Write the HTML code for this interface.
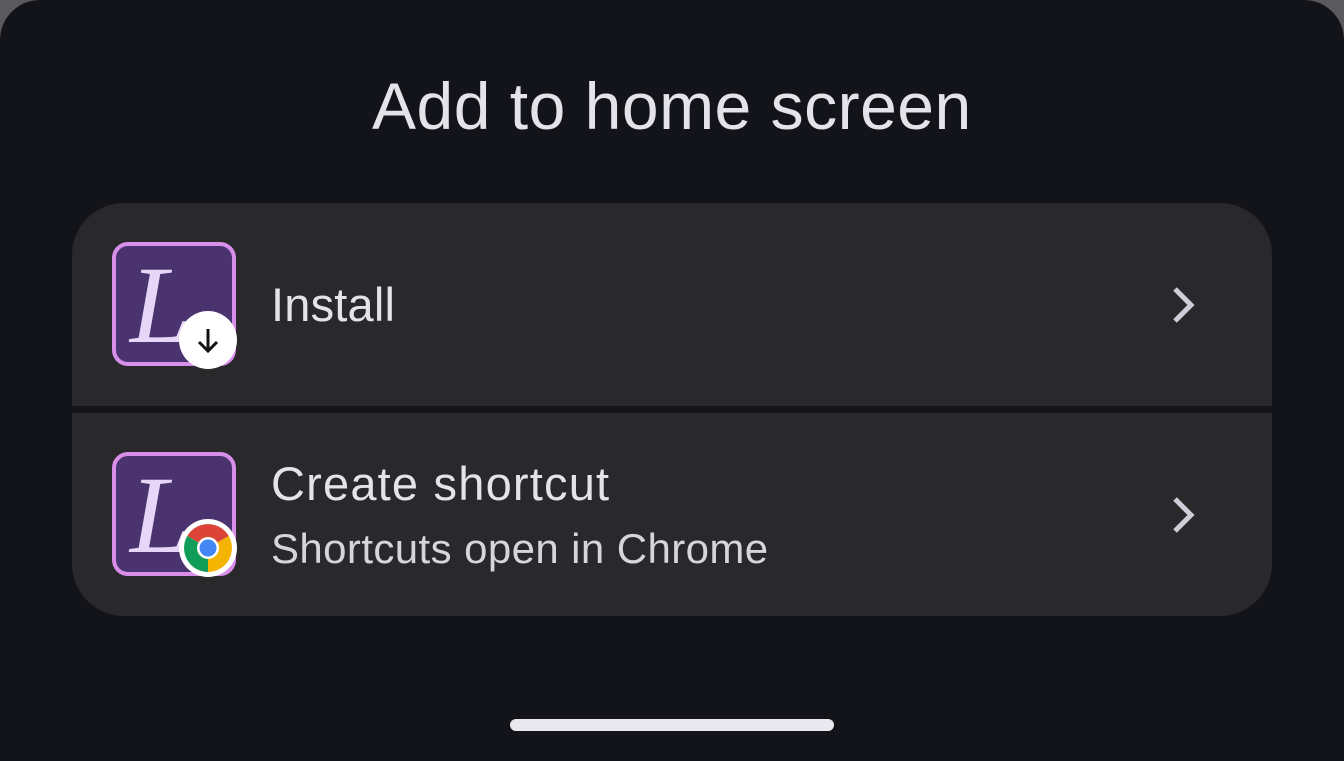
<!DOCTYPE html>
<html><head><style>
html,body{margin:0;padding:0;}
body{width:1344px;height:761px;background:#5a5a5c;position:relative;overflow:hidden;font-family:"Liberation Sans",sans-serif;}
.sheet{position:absolute;left:0;top:0;width:1344px;height:761px;background:#131419;border-radius:40px 40px 0 0;}
.card{position:absolute;left:72px;width:1200px;background:#29292b;}
.t{position:absolute;color:#e4e3ea;white-space:nowrap;}
.icon{position:absolute;left:112px;width:116px;height:116px;border:4px solid #d98fe9;border-radius:16px;background:#4a336e;overflow:hidden;}
.badge{position:absolute;left:179px;width:58px;height:58px;border-radius:50%;background:#fff;}
</style></head><body>
<div class="sheet"></div>
<div class="t" style="left:372px;top:68px;font-size:66px;letter-spacing:0.5px;">Add to home screen</div>
<div class="card" style="top:203px;height:203px;border-radius:52px 52px 0 0;"></div>
<div class="card" style="top:413px;height:203px;border-radius:0 0 52px 52px;"></div>

<div class="icon" style="top:242px;"></div>
<div class="t" style="left:130px;top:242px;font-family:'Liberation Serif',serif;font-style:italic;font-size:110px;color:#e8d6f8;">L</div>
<div class="badge" style="top:311px;"></div>
<svg style="position:absolute;left:179px;top:311px" width="58" height="58" viewBox="0 0 58 58"><path d="M29 18v21M20 31l9 9 9-9" stroke="#111" stroke-width="3" fill="none"/></svg>
<div class="t" style="left:271px;top:277px;font-size:47px;letter-spacing:0.2px;">Install</div>
<svg style="position:absolute;left:1165px;top:284px" width="40" height="42"><path d="M10 5l16 16-16 16" stroke="#cfcdd8" stroke-width="5" fill="none"/></svg>

<div class="icon" style="top:452px;"></div>
<div class="t" style="left:130px;top:452px;font-family:'Liberation Serif',serif;font-style:italic;font-size:110px;color:#e8d6f8;">L</div>
<div class="badge" style="top:519px;"></div>
<svg style="position:absolute;left:183px;top:523px" width="50" height="50" viewBox="-25 -25 50 50">
<path d="M0 0L-21.6 -12.5A25 25 0 0 1 21.6 -12.5Z" fill="#db4437" transform="scale(0.96)"/>
<path d="M0 0L21.6 -12.5A25 25 0 0 1 0 25Z" fill="#f4b400" transform="scale(0.96)"/>
<path d="M0 0L0 25A25 25 0 0 1 -21.6 -12.5Z" fill="#0f9d58" transform="scale(0.96)"/>
<circle r="11" fill="#fff"/><circle r="8.5" fill="#4285f4"/></svg>
<div class="t" style="left:271px;top:456px;font-size:47px;letter-spacing:1.2px;">Create shortcut</div>
<div class="t" style="left:271px;top:525px;font-size:42px;letter-spacing:0.4px;color:#d6d5dc;">Shortcuts open in Chrome</div>
<svg style="position:absolute;left:1165px;top:494px" width="40" height="42"><path d="M10 5l16 16-16 16" stroke="#cfcdd8" stroke-width="5" fill="none"/></svg>

<div style="position:absolute;left:510px;top:719px;width:324px;height:12px;border-radius:6px;background:#e9e8ee;"></div>
</body></html>
